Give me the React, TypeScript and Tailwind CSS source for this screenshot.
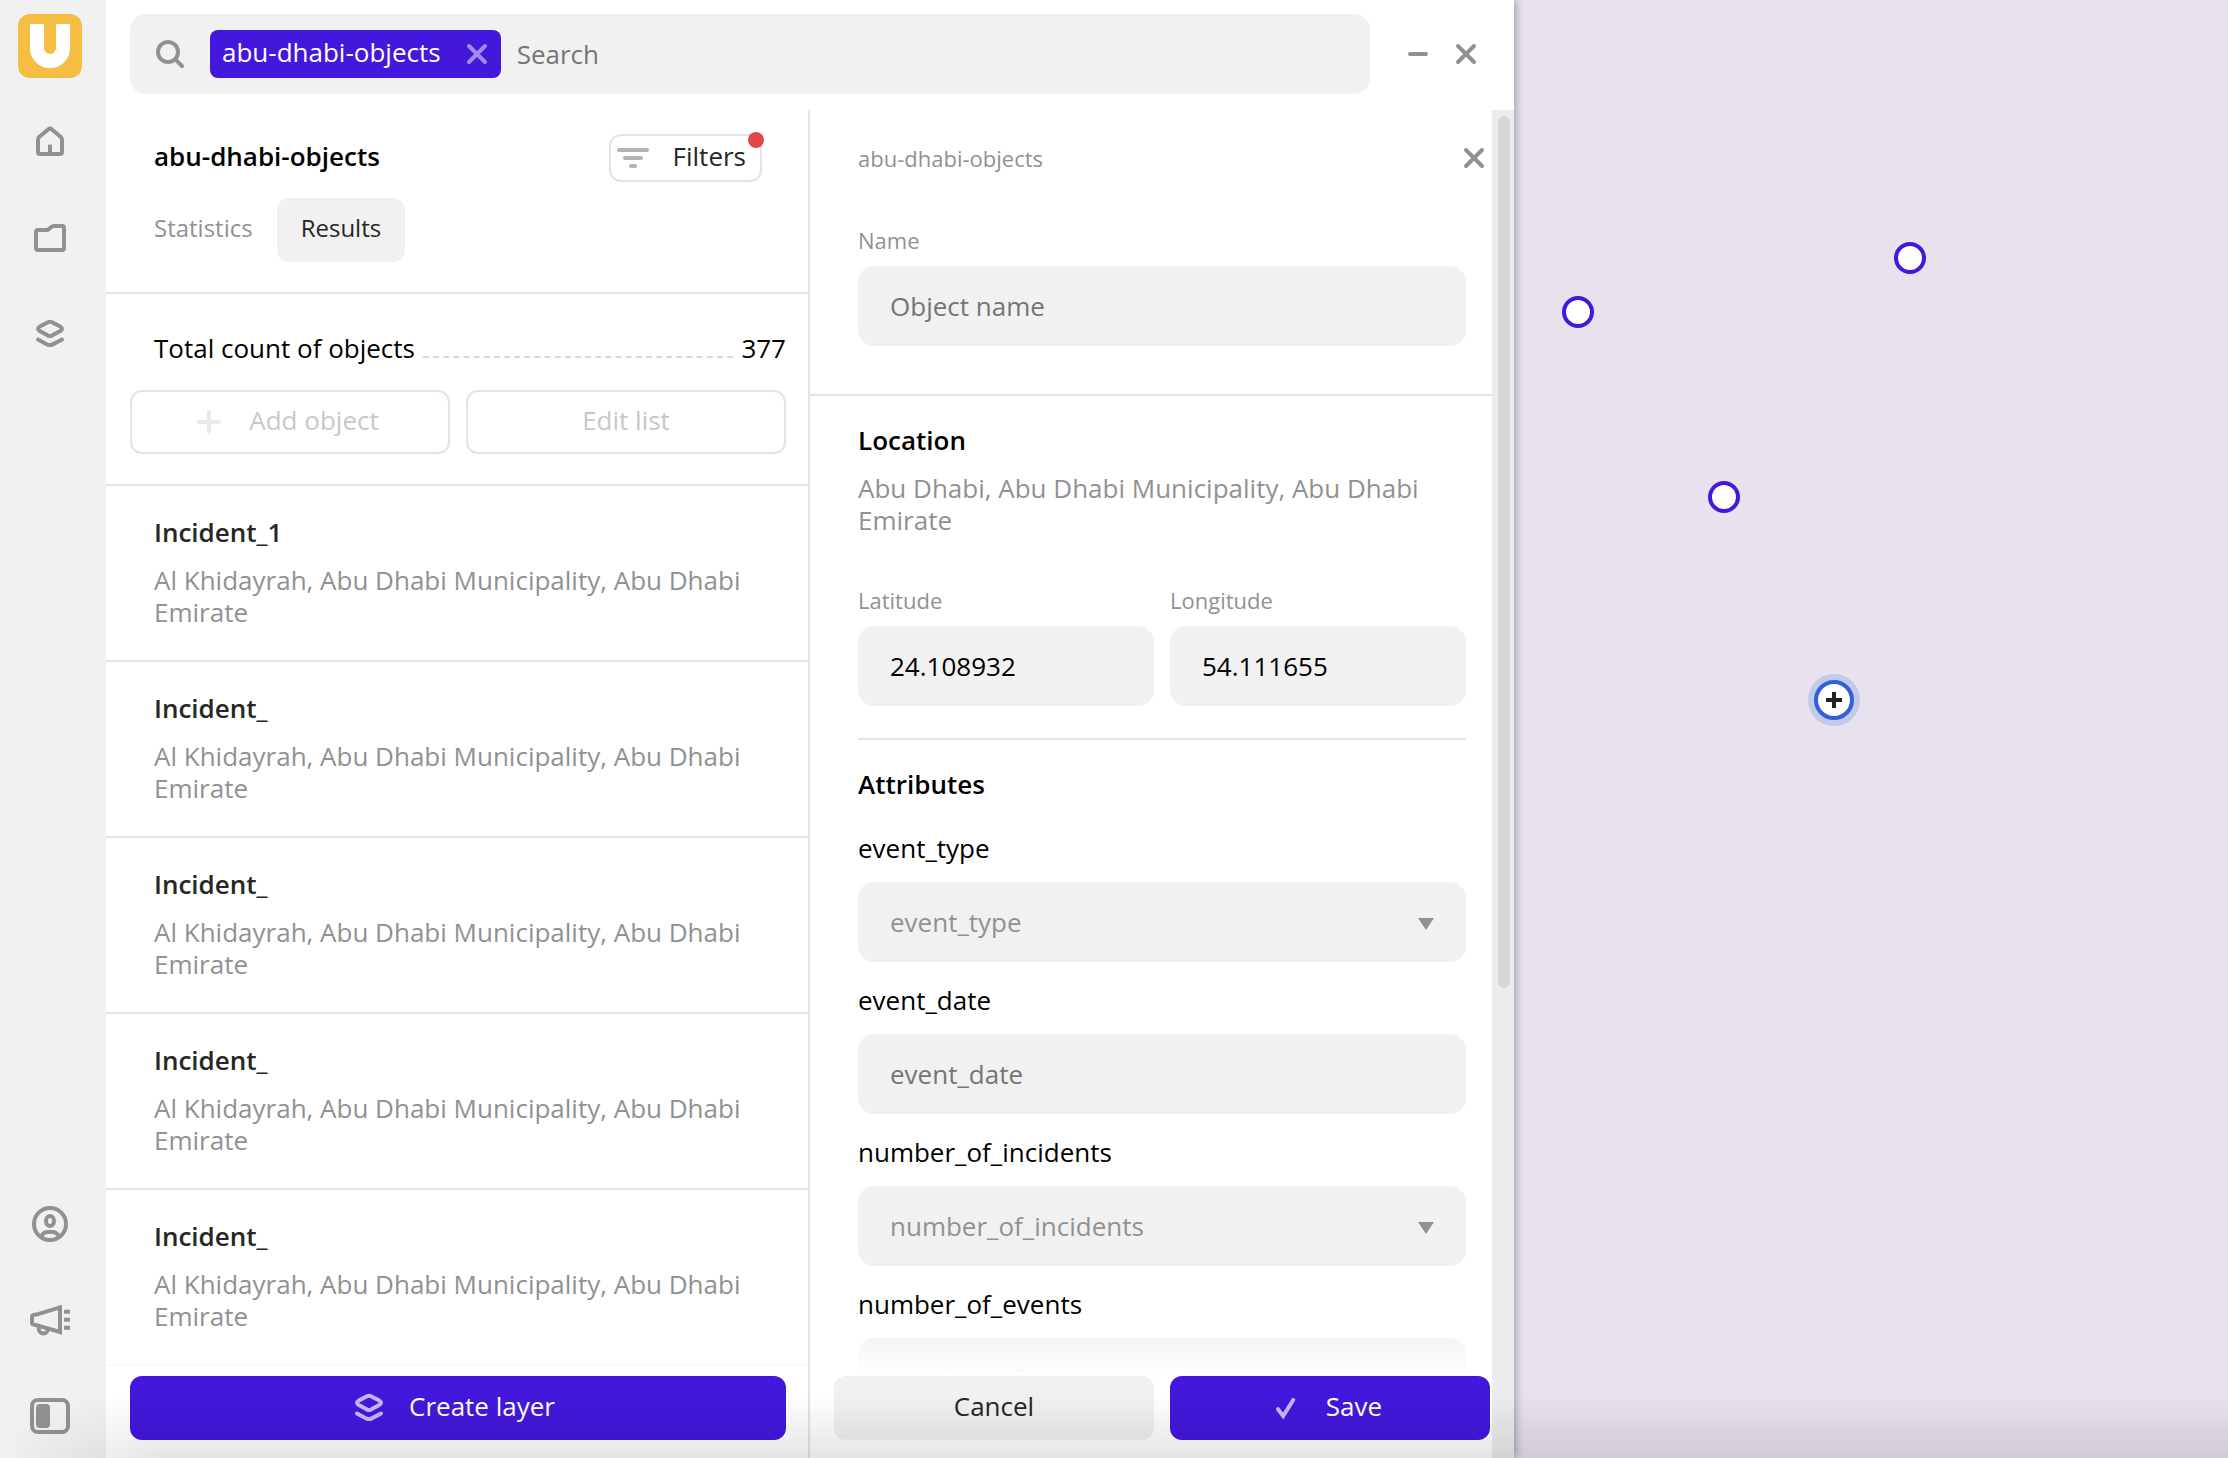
import type { ReactNode } from "react";

const incidents = ["Incident_1", "Incident_", "Incident_", "Incident_", "Incident_"];

const attributes = [
  { name: "event_type", select: true },
  { name: "event_date", select: false },
  { name: "number_of_incidents", select: true },
  { name: "number_of_events", select: false },
];

const markers = [
  { x: 396, y: 258 },
  { x: 64, y: 312 },
  { x: 210, y: 497 },
];

function Icon({ children, className, w = 2 }: { children: ReactNode; className?: string; w?: number }) {
  return (
    <svg viewBox="0 0 20 20" fill="none" stroke="currentColor" strokeWidth={w} className={className} aria-hidden="true">
      {children}
    </svg>
  );
}

function Layers({ className }: { className?: string }) {
  return (
    <Icon className={className}>
      <path d="M9 4.1 4.9 6.3Q3.1 7.4 4.9 8.5L9 10.8Q10 11.3 11 10.8L15.1 8.5Q16.9 7.4 15.1 6.3L11 4.1Q10 3.6 9 4.1Z" />
      <path d="M4 12.8 8.6 15.2Q10 15.9 11.4 15.2L16 12.8" strokeLinecap="round" />
    </Icon>
  );
}

function Cross({ className }: { className?: string }) {
  return (
    <Icon className={className}>
      <path d="M6 6 14 14M14 6 6 14" strokeLinecap="round" />
    </Icon>
  );
}

function SideButton({ label, children }: { label: string; children: ReactNode }) {
  return (
    <button aria-label={label} className="flex size-10 items-center justify-center text-[#919191]">
      {children}
    </button>
  );
}

function Sidebar() {
  return (
    <aside className="z-10 flex w-[106px] shrink-0 flex-col bg-[#f1f1f1] pt-[14px] pb-[22px] pl-[18px]">
      <div className="flex size-16 items-center justify-center rounded-xl bg-[#f5be42]">
        <svg viewBox="0 0 40 44" className="h-11 w-10" aria-hidden="true">
          <path d="M7 0V24a13 13 0 0 0 26 0V0" fill="none" stroke="#fff" strokeWidth="14" />
        </svg>
      </div>
      <nav className="flex w-16 flex-1 flex-col items-center pt-11">
        <SideButton label="Home">
          <Icon className="size-10">
            <path d="M4 8.9Q4 8 4.7 7.4L9.2 3.6Q10 3 10.8 3.6L15.3 7.4Q16 8 16 8.9V15Q16 16 15 16H5Q4 16 4 15Z" />
            <path d="M10 16V11.3" />
          </Icon>
        </SideButton>
        <div className="mt-14">
          <SideButton label="Projects">
            <Icon className="size-10">
              <path d="M3 7Q3 6 4 6H8.2Q9 6 9.5 5.5L10.5 4.6Q11.1 4 12 4H16Q17 4 17 5V15Q17 16 16 16H4Q3 16 3 15Z" />
            </Icon>
          </SideButton>
        </div>
        <div className="mt-14">
          <SideButton label="Layers">
            <Layers className="size-10" />
          </SideButton>
        </div>
        <div className="mt-auto">
          <SideButton label="Account">
            <Icon className="size-10">
              <circle cx="10" cy="10" r="8" />
              <ellipse cx="10" cy="8.5" rx="2" ry="2.5" />
              <path d="M5.6 16.2Q6.8 14 8.8 14H11.2Q13.2 14 14.4 16.2" />
            </Icon>
          </SideButton>
        </div>
        <div className="mt-14">
          <SideButton label="News">
            <Icon className="size-10">
              <path d="M1 8.4Q1 7.6 1.8 7.5L3.2 7.3 15 3.7V16L3.2 12.6 1.8 12.3Q1 12.1 1 11.4Z" />
              <path d="M4.4 13V14.4A2.3 2.3 0 0 0 9 14.4V14.2" />
              <path d="M17 5.9H20M17 9.9H20M17 13.9H20" />
            </Icon>
          </SideButton>
        </div>
        <div className="mt-14">
          <SideButton label="Toggle panel">
            <Icon className="size-10">
              <rect x="1" y="2" width="18" height="16" rx="3" />
              <rect x="3" y="4" width="7" height="12" rx="2" fill="currentColor" stroke="none" />
            </Icon>
          </SideButton>
        </div>
      </nav>
    </aside>
  );
}

function SearchBar() {
  return (
    <header className="flex h-[110px] shrink-0 items-start pt-[14px] pr-7 pl-6">
      <div className="flex h-20 flex-1 items-center rounded-2xl bg-[#f1f1f1] pl-5">
        <Icon className="size-10 text-[#919191]">
          <circle cx="9" cy="9" r="5" />
          <path d="M12.8 12.8 16 16" strokeLinecap="round" />
        </Icon>
        <div className="ml-5 flex h-12 items-center rounded-lg bg-[#4318dc] pr-1 pl-3 text-white">
          <span className="pb-1">abu-dhabi-objects</span>
          <button aria-label="Remove abu-dhabi-objects" className="ml-4 text-[#a18bed]">
            <Cross className="size-10" />
          </button>
        </div>
        <input
          type="text"
          aria-label="Search"
          placeholder="Search"
          className="ml-4 min-w-0 flex-1 bg-transparent outline-none placeholder:text-[#757575]"
        />
      </div>
      <div className="ml-7 flex h-20 items-center gap-2 text-[#919191]">
        <button aria-label="Minimize">
          <Icon className="size-10">
            <path d="M6 10H14" strokeLinecap="round" />
          </Icon>
        </button>
        <button aria-label="Close">
          <Cross className="size-10" />
        </button>
      </div>
    </header>
  );
}

function ObjectList() {
  return (
    <section className="relative flex w-[704px] shrink-0 flex-col overflow-hidden border-r-2 border-[#e4e4e4]">
      <div className="border-b-2 border-[#e4e4e4] pt-6 pr-[46px] pb-[30px] pl-12">
        <div className="flex h-12 items-center justify-between">
          <h1 className="pb-1 font-semibold text-black">abu-dhabi-objects</h1>
          <button className="relative flex h-12 items-center rounded-xl border-2 border-[#e4e4e4] pr-[14px] pl-[2px]">
            <Icon className="size-10 text-[#b3b3b3]">
              <path d="M3 6H17M6 10H14M9 14H11" strokeLinecap="round" />
            </Icon>
            <span className="ml-5 pb-1">Filters</span>
            <span className="absolute -top-1 -right-1 size-4 rounded-full bg-[#e24646]" />
          </button>
        </div>
        <div className="mt-4 flex h-16 items-center text-[24px]">
          <button className="pb-1 text-[#919191]">Statistics</button>
          <button className="ml-6 h-16 rounded-xl bg-[#f1f1f1] px-6 pb-1">Results</button>
        </div>
      </div>

      <div className="border-b-2 border-[#e4e4e4] pt-[38px] pr-[22px] pb-[30px] pl-6">
        <div className="flex items-end pl-6 text-black">
          <span>Total count of objects</span>
          <span className="mx-2 mb-[6px] flex-1 border-b-2 border-dashed border-[#d8d8d8]" />
          <span>377</span>
        </div>
        <div className="mt-[26px] grid grid-cols-2 gap-4 text-[#c8c8c8]">
          <button disabled className="flex h-16 items-center justify-center rounded-xl border-2 border-[#e4e4e4] pr-3">
            <Icon className="size-10 text-[#eaeaea]">
              <path d="M5 10H15M10 5V15" strokeLinecap="round" />
            </Icon>
            <span className="ml-5 pb-1">Add object</span>
          </button>
          <button disabled className="h-16 rounded-xl border-2 border-[#e4e4e4] pb-1">
            Edit list
          </button>
        </div>
      </div>

      <ul className="min-h-0 flex-1 overflow-hidden">
        {incidents.map((name, i) => (
          <li key={i} className="border-b-2 border-[#e4e4e4] pt-[30px] pr-10 pb-8 pl-12">
            <h2 className="font-semibold">{name}</h2>
            <p className="mt-4 text-[#919191]">Al Khidayrah, Abu Dhabi Municipality, Abu Dhabi Emirate</p>
          </li>
        ))}
      </ul>

      <div className="absolute inset-x-0 bottom-0 bg-linear-to-t from-white from-65% to-transparent pt-12 pr-[22px] pb-[18px] pl-6">
        <button className="flex h-16 w-full items-center justify-center rounded-xl bg-[#4318dc] pr-3 text-white">
          <Layers className="size-10 text-[#c4b8f4]" />
          <span className="ml-5 pb-1">Create layer</span>
        </button>
      </div>
    </section>
  );
}

const fieldClass =
  "block h-20 w-full appearance-none rounded-2xl bg-[#f1f1f1] px-8 outline-none placeholder:text-[#757575]";

function Attribute({ name, select }: { name: string; select: boolean }) {
  return (
    <div className="mb-[22px]">
      <label htmlFor={name} className="mb-[18px] block text-black">
        {name}
      </label>
      {select ? (
        <div className="relative">
          <select id={name} defaultValue="" className={fieldClass + " text-[#919191]"}>
            <option value="">{name}</option>
          </select>
          <svg viewBox="0 0 16 12" className="pointer-events-none absolute top-9 right-8 h-3 w-4 fill-[#919191]" aria-hidden="true">
            <path d="M0 0H16L8 12Z" />
          </svg>
        </div>
      ) : (
        <input id={name} type="text" placeholder={name} className={fieldClass} />
      )}
    </div>
  );
}

function ObjectForm() {
  return (
    <section className="relative min-w-0 flex-1 overflow-hidden">
      <div className="h-full overflow-hidden">
        <div className="border-b-2 border-[#e4e4e4] pt-7 pr-[26px] pb-12 pl-12">
          <div className="flex h-10 items-center justify-between text-[22px] text-[#919191]">
            <span>abu-dhabi-objects</span>
            <button aria-label="Close object" className="-mr-7">
              <Cross className="size-10" />
            </button>
          </div>
          <label htmlFor="name" className="mt-[46px] block text-[22px] text-[#919191]">
            Name
          </label>
          <input id="name" type="text" placeholder="Object name" className={fieldClass + " mt-[10px]"} />
        </div>

        <div className="pt-7 pr-[26px] pl-12">
          <h2 className="font-semibold text-black">Location</h2>
          <p className="mt-4 text-[#919191]">Abu Dhabi, Abu Dhabi Municipality, Abu Dhabi Emirate</p>
          <div className="mt-12 grid grid-cols-2 gap-4">
            <div>
              <label htmlFor="lat" className="block text-[22px] text-[#919191]">
                Latitude
              </label>
              <input id="lat" type="text" defaultValue="24.108932" className={fieldClass + " mt-[10px] text-black"} />
            </div>
            <div>
              <label htmlFor="lng" className="block text-[22px] text-[#919191]">
                Longitude
              </label>
              <input id="lng" type="text" defaultValue="54.111655" className={fieldClass + " mt-[10px] text-black"} />
            </div>
          </div>
          <hr className="mt-8 border-t-2 border-[#e4e4e4]" />
          <h2 className="mt-7 mb-8 font-semibold text-black">Attributes</h2>
          {attributes.map((a) => (
            <Attribute key={a.name} {...a} />
          ))}
        </div>
      </div>

      <div className="absolute inset-x-0 bottom-0 grid grid-cols-2 gap-4 bg-linear-to-t from-white from-65% to-transparent pt-12 pr-[2px] pb-[18px] pl-6">
        <button className="h-16 rounded-xl bg-[#f1f1f1] pb-1">Cancel</button>
        <button className="flex h-16 items-center justify-center rounded-xl bg-[#4318dc] pr-3 text-white">
          <Icon className="size-10 text-[#c4b8f4]">
            <path d="M6 10.6 8.6 14 13.6 6" strokeLinecap="round" />
          </Icon>
          <span className="ml-5 pb-1">Save</span>
        </button>
      </div>
    </section>
  );
}

function MapView() {
  return (
    <main className="relative min-w-0 flex-1 overflow-hidden bg-[#e8e2ee]">
      {markers.map((m) => (
        <span
          key={m.x}
          className="absolute size-8 -translate-1/2 rounded-full border-4 border-[#4318dc] bg-white"
          style={{ left: m.x, top: m.y }}
        />
      ))}
      <span
        className="absolute flex size-[52px] -translate-1/2 items-center justify-center rounded-full bg-[#c3c9e8]"
        style={{ left: 320, top: 700 }}
      >
        <span className="flex size-10 items-center justify-center rounded-full border-4 border-[#3060dc] bg-white">
          <svg viewBox="0 0 16 16" className="size-4" aria-hidden="true">
            <path d="M8 0V16M0 8H16" stroke="#222" strokeWidth="4" />
          </svg>
        </span>
      </span>
    </main>
  );
}

export default function App() {
  return (
    <div className="relative flex h-screen overflow-hidden bg-white font-['Open_Sans',sans-serif] text-[26px] leading-8 text-[#262626]">
      <Sidebar />
      <div className="z-10 flex w-[1408px] shrink-0 flex-col bg-white shadow-[2px_0_8px_rgba(0,0,0,0.3)] [clip-path:inset(0_-16px_0_0)]">
        <SearchBar />
        <div className="flex min-h-0 flex-1">
          <ObjectList />
          <ObjectForm />
          <div className="w-[22px] shrink-0 bg-[#ececec] pt-[6px] pl-[6px]">
            <div className="h-[65%] w-3 rounded-full bg-[#d6d6d6]" />
          </div>
        </div>
      </div>
      <MapView />
      <div className="pointer-events-none absolute inset-x-0 bottom-0 z-20 h-16 bg-linear-to-t from-black/10 to-transparent [mask-image:linear-gradient(to_right,transparent,black_160px)]" />
    </div>
  );
}
